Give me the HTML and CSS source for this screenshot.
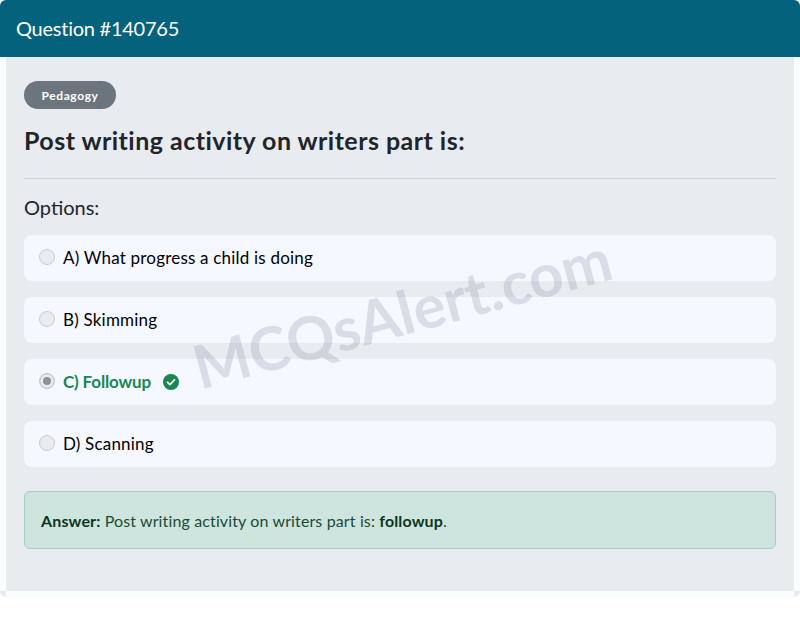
FILE: index.html
```html
<!DOCTYPE html>
<html>
<head>
  <title>Question #140765</title>
  <link rel="stylesheet" href="styles.css">
</head>
<body>
  <div class="card">
    <div class="card-header">Question #140765</div>
    <div class="card-body">
      <span class="badge">Pedagogy</span>
      <h1 class="question">Post writing activity on writers part is:</h1>
      <hr class="divider">
      <h2 class="options-title">Options:</h2>
      <div class="option">
        <span class="radio"></span>
        <span class="option-text">A) What progress a child is doing</span>
      </div>
      <div class="option">
        <span class="radio"></span>
        <span class="option-text">B) Skimming</span>
      </div>
      <div class="option correct">
        <span class="radio checked"></span>
        <span class="option-text">C) Followup</span>
        <svg class="check" width="16" height="16" viewBox="0 0 16 16">
          <circle cx="8" cy="8" r="8" fill="#198754"/>
          <path d="M4.6 8.3l2.3 2.3 4.5-4.7" fill="none" stroke="#fff" stroke-width="1.8" stroke-linecap="round" stroke-linejoin="round"/>
        </svg>
      </div>
      <div class="option">
        <span class="radio"></span>
        <span class="option-text">D) Scanning</span>
      </div>
      <div class="answer"><b>Answer:</b> Post writing activity on writers part is: <b>followup</b>.</div>
    </div>
    <div class="card-foot"></div>
    <div class="watermark">MCQsAlert.com</div>
  </div>
</body>
</html>
```

FILE: styles.css
```css
body {
  margin: 0;
  background-color: #fff;
  font-family: Lato, "Open Sans", sans-serif;
}
.card {
  position: relative;
  background-color: #e8ebf0;
  border-radius: 6px;
  overflow: hidden;
  height: 597px;
}
.card-header {
  height: 57px;
  box-sizing: border-box;
  padding: 15px 16px 0;
  background-color: #05627c;
  color: #fff;
  font-size: 20px;
  letter-spacing: -0.25px;
  line-height: 26px;
}
.card-body {
  height: 534px;
  box-sizing: border-box;
  padding: 24px 18px 0;
  border-left: 6px solid #fafdff;
  border-right: 6px solid #fafdff;
}
.card-foot {
  height: 6px;
  margin: 0 6px;
  background-color: #fafdff;
}
.badge {
  display: block;
  width: 92px;
  height: 28px;
  border-radius: 14px;
  background-color: #6c757d;
  color: #fff;
  font-size: 12px;
  font-weight: 700;
  line-height: 30px;
  text-align: center;
  letter-spacing: 0.6px;
}
.question {
  margin: 15px 0 0;
  font-size: 25px;
  line-height: 32px;
  font-weight: 700;
  color: #212529;
  letter-spacing: 0.47px;
}
.divider {
  margin: 22px 0 16px;
  border: none;
  border-top: 1px solid #cdd0d4;
}
.options-title {
  margin: 0 0 14px;
  font-size: 20px;
  line-height: 24px;
  font-weight: 400;
  color: #212529;
  padding-bottom: 2px;
}
.option {
  display: flex;
  align-items: center;
  height: 46px;
  margin-bottom: 16px;
  padding-left: 15px;
  background-color: #f5f8ff;
  border-radius: 8px;
  font-size: 17px;
  letter-spacing: 0.2px;
  color: #000;
}
.option-text {
  margin-bottom: 1px;
}
.radio {
  width: 16px;
  height: 16px;
  margin-right: 8px;
  margin-top: -2px;
  box-sizing: border-box;
  border: 1px solid #c9cdd2;
  border-radius: 50%;
  background-color: #e9ecef;
}
.radio.checked {
  background-color: #8f9296;
  box-shadow: inset 0 0 0 3px #e9ecef;
}
.correct .option-text {
  color: #198754;
  font-weight: 700;
  letter-spacing: -0.15px;
}
.check {
  margin-left: 12px;
}
.answer {
  margin-top: 24px;
  height: 58px;
  box-sizing: border-box;
  padding: 0 16px;
  border: 1px solid #a3cfbb;
  border-radius: 6px;
  background-color: #cde5de;
  color: #1b4a35;
  font-size: 16px;
  letter-spacing: 0.13px;
  line-height: 58px;
}
.answer b {
  color: #0a3622;
}
.watermark {
  position: absolute;
  left: 402px;
  top: 312px;
  transform: translate(-50%, -50%) rotate(-15deg);
  color: rgba(108, 117, 140, 0.2);
  font-size: 60px;
  font-weight: 700;
  white-space: nowrap;
}
```
